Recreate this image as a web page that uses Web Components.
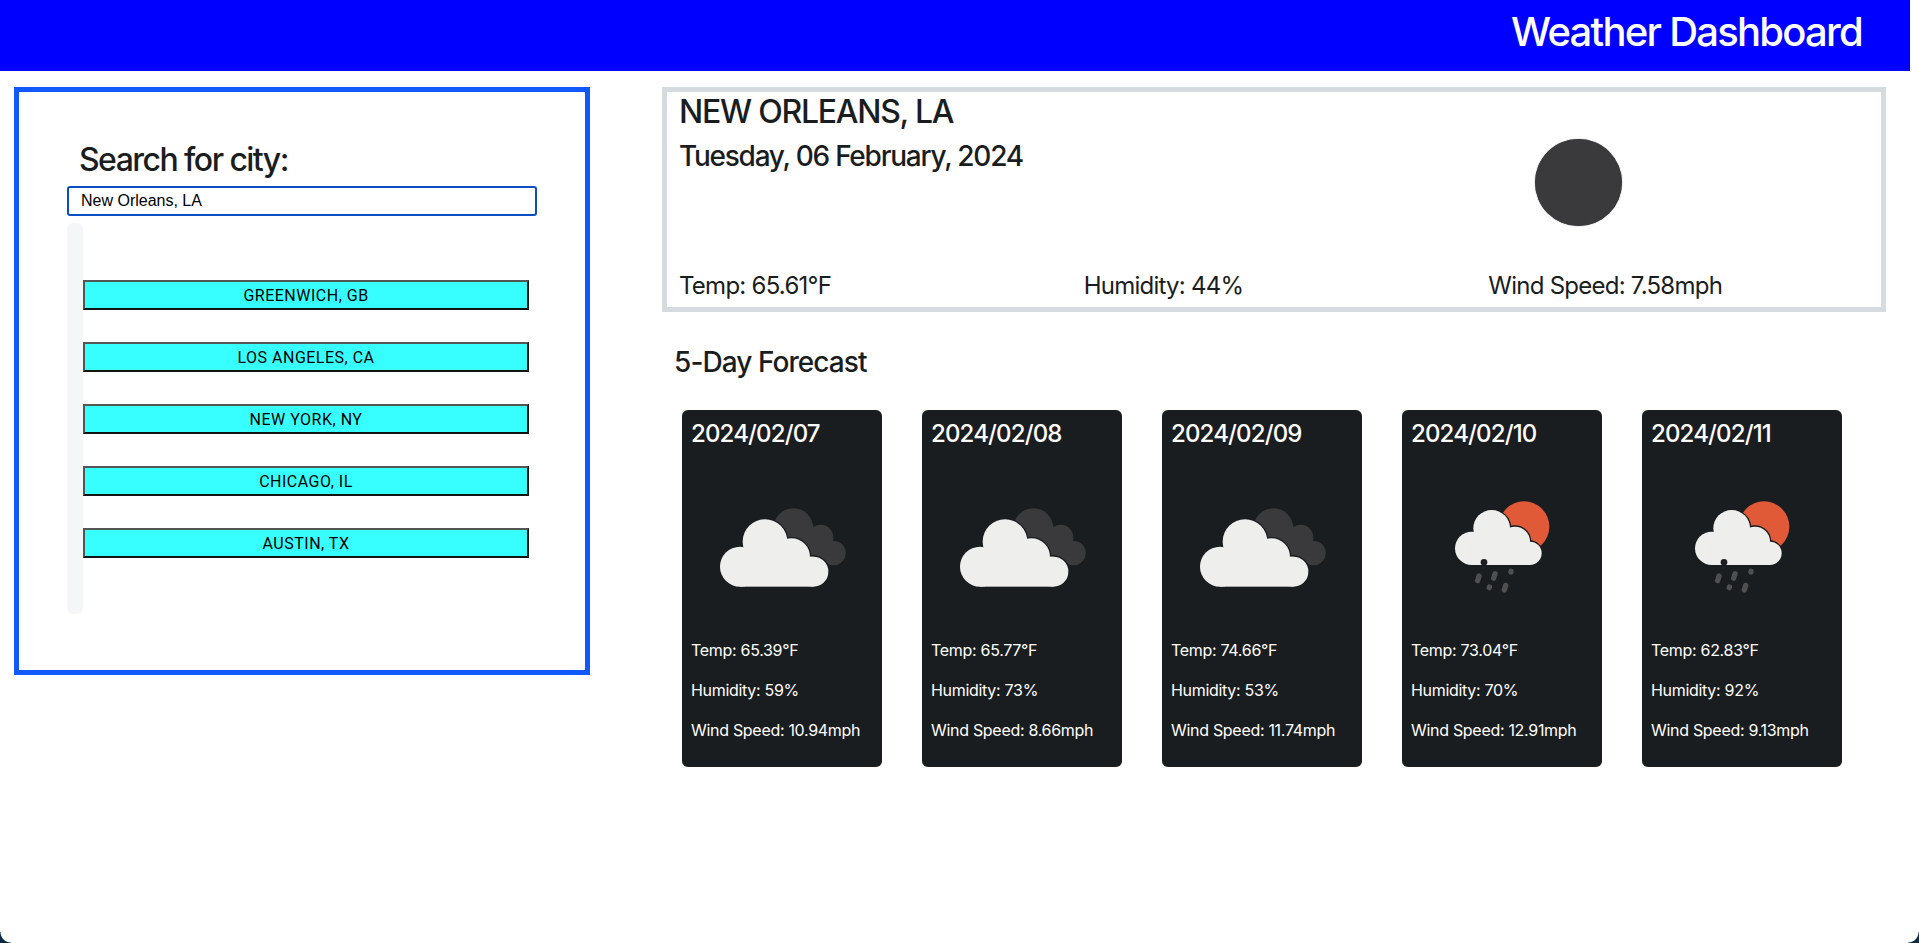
<!DOCTYPE html>
<html lang="en">
<head>
<meta charset="utf-8">
<title>Weather Dashboard</title>
<style>
	html, body {
		margin: 0;
		background: #fff;
		color: #1a1d20;
		font-family: Inter, sans-serif;
	}
</style>
</head>
<body>
<weather-app>
	<app-header slot="header">Weather Dashboard</app-header>
	<search-panel slot="search" value="New Orleans, LA">
		<city-button>GREENWICH, GB</city-button>
		<city-button>LOS ANGELES, CA</city-button>
		<city-button>NEW YORK, NY</city-button>
		<city-button>CHICAGO, IL</city-button>
		<city-button>AUSTIN, TX</city-button>
	</search-panel>
	<current-weather slot="current" city="NEW ORLEANS, LA" date="Tuesday, 06 February, 2024" temp="65.61" humidity="44" wind="7.58"></current-weather>
	<forecast-card slot="forecast" date="2024/02/07" icon="clouds" temp="65.39" humidity="59" wind="10.94"></forecast-card>
	<forecast-card slot="forecast" date="2024/02/08" icon="clouds" temp="65.77" humidity="73" wind="8.66"></forecast-card>
	<forecast-card slot="forecast" date="2024/02/09" icon="clouds" temp="74.66" humidity="53" wind="11.74"></forecast-card>
	<forecast-card slot="forecast" date="2024/02/10" icon="rain" temp="73.04" humidity="70" wind="12.91"></forecast-card>
	<forecast-card slot="forecast" date="2024/02/11" icon="rain" temp="62.83" humidity="92" wind="9.13"></forecast-card>
</weather-app>

<script>
(() => {
	const define = (name, styles, markup) => {
		customElements.define(name,
			class extends HTMLElement {
				constructor() {
					super();
					this.attachShadow({ mode: 'open' });
				}

				connectedCallback() {
					const attr = (key) => this.getAttribute(key);
					this.shadowRoot.innerHTML = `<style>${styles}</style>${markup(attr)}`;
				}
			}
		);
	};

	const cloud_shape = (parts) => parts.map(([ x, y, r ]) => `<circle cx="${x}" cy="${y}" r="${r}"/>`).join('');

	define('app-header', `
		:host {
			display: block;
			height: 71px;
			margin-right: 9px;
			background: #0000ff;
			color: #fff;
		}

		h1 {
			margin: 0;
			padding-right: 48px;
			font-size: 40px;
			font-weight: 500;
			letter-spacing: -1.75px;
			line-height: 64px;
			text-align: right;
		}
	`, () => `<h1><slot></slot></h1>`);

	define('city-button', `
		:host {
			display: block;
		}

		button {
			display: block;
			box-sizing: border-box;
			width: 100%;
			height: 30px;
			padding: 0;
			background: #38ffff;
			border: 2px solid;
			border-color: #555 #141414 #141414 #555;
			color: #000;
			font-family: Roboto, sans-serif;
			font-size: 16px;
			letter-spacing: 0.5px;
			text-align: center;
		}
	`, () => `<button type="button"><slot></slot></button>`);

	define('search-panel', `
		:host {
			display: block;
			box-sizing: border-box;
			height: 588px;
			padding: 49px 48px 0;
			border: 5px solid #1059ff;
		}

		h3 {
			margin: 0 0 8px;
			padding-left: 12px;
			font-size: 32px;
			font-weight: 500;
			letter-spacing: -1.55px;
			line-height: 37px;
		}

		input {
			display: block;
			box-sizing: border-box;
			width: 470px;
			height: 30px;
			padding: 0 12px;
			background: #fff;
			border: 2px solid #0b4fc4;
			border-radius: 3px;
			color: #000;
			font-family: "Liberation Sans", sans-serif;
			font-size: 16px;
			outline: none;
		}

		.history {
			display: flex;
			width: 470px;
			margin-top: 7px;
		}

		.track {
			flex: 0 0 16px;
			height: 391px;
			background: #f5f6f8;
			border-radius: 6px;
		}

		.list {
			flex: 1;
			display: flex;
			flex-direction: column;
			gap: 32px;
			padding: 57px 8px 0 0;
		}
	`, (attr) => `
		<h3>Search for city:</h3>
		<input type="text" value="${attr('value')}">
		<div class="history">
			<div class="track"></div>
			<div class="list"><slot></slot></div>
		</div>
	`);

	define('current-weather', `
		:host {
			display: block;
			box-sizing: border-box;
			height: 225px;
			border: 5px solid #d6dbdf;
		}

		.top {
			display: grid;
			grid-template-columns: 1fr 1fr;
			align-items: center;
			height: 179px;
		}

		.names {
			align-self: start;
			padding-left: 12px;
		}

		h2, h3 {
			margin: 0;
			font-weight: 500;
		}

		h2 {
			padding-top: 1px;
			font-size: 32px;
			letter-spacing: -1.25px;
			line-height: 38px;
		}

		h3 {
			margin-top: 8px;
			font-size: 28px;
			letter-spacing: -1.25px;
			line-height: 34px;
		}

		.icon {
			justify-self: center;
			width: 87px;
			height: 87px;
			margin: 1px 0 0 2px;
			background: #3a3a3c;
			border-radius: 50%;
			box-shadow: 0 0 1px #3a3a3c;
		}

		.stats {
			display: grid;
			grid-template-columns: repeat(3, 1fr);
			font-size: 24px;
			letter-spacing: -0.75px;
			line-height: 29px;
		}

		.stats span {
			padding-left: 12px;
		}
	`, (attr) => `
		<div class="top">
			<div class="names">
				<h2>${attr('city')}</h2>
				<h3>${attr('date')}</h3>
			</div>
			<div class="icon"></div>
		</div>
		<div class="stats">
			<span>Temp: ${attr('temp')}°F</span>
			<span>Humidity: ${attr('humidity')}%</span>
			<span>Wind Speed: ${attr('wind')}mph</span>
		</div>
	`);

	const cloud_front = [ [ 255, 425, 67 ], [ 180, 500, 60 ], [ 335, 470, 55 ], [ 400, 515, 45 ] ];
	const cloud_back = [ [ 340, 385, 60 ], [ 422, 412, 38 ], [ 460, 459, 37 ], [ 400, 440, 50 ] ];
	const rain_front = [ [ 275, 145, 55 ], [ 215, 205, 50 ], [ 345, 185, 45 ], [ 390, 220, 35 ] ];
	const drops = [ [ 235, 295, 16, 15 ], [ 283, 288, 16, 15 ], [ 333, 275, 16, 9 ], [ 268, 322, 16, 9 ], [ 315, 323, 16, 15 ] ];

	const icons = {
		clouds: `
			<svg viewBox="36 144 540 570">
				<g fill="#3a3a3c">${cloud_shape(cloud_back)}</g>
				<g fill="#1a1d20" stroke="#1a1d20" stroke-width="8">${cloud_shape(cloud_front)}<rect x="180" y="470" width="220" height="90"/></g>
				<g fill="#eeeeec">${cloud_shape(cloud_front)}<rect x="180" y="470" width="220" height="90"/></g>
			</svg>`,
		rain: `
			<svg viewBox="36 -96 540 570">
				<circle cx="372" cy="140" r="76" fill="#e05a38"/>
				<g fill="#1a1d20" stroke="#1a1d20" stroke-width="8">${cloud_shape(rain_front)}<rect x="215" y="185" width="175" height="70"/></g>
				<g fill="#eeeeec">${cloud_shape(rain_front)}<rect x="215" y="185" width="175" height="70"/></g>
				<circle cx="252" cy="247" r="10" fill="#1a1d20"/>
				<g fill="#4d4f51">${drops.map(([ x, y, w, h ]) => `<rect x="${x - w / 2}" y="${y - h}" width="${w}" height="${h * 2}" rx="7" transform="rotate(18 ${x} ${y})"/>`).join('')}</g>
			</svg>`,
	};

	define('forecast-card', `
		:host {
			display: block;
			box-sizing: border-box;
			width: 200px;
			height: 357px;
			padding: 9px;
			background: #1a1d20;
			border-radius: 6px;
			color: #fff;
		}

		h4 {
			margin: 0;
			font-size: 24px;
			font-weight: 500;
			letter-spacing: -0.85px;
			line-height: 29px;
		}

		svg {
			display: block;
			width: 180px;
			height: 190px;
			margin-left: 1px;
		}

		p {
			margin: 0 0 16px;
			font-size: 16px;
			letter-spacing: -0.3px;
			line-height: 24px;
		}

		p:last-child {
			margin-bottom: 0;
		}
	`, (attr) => `
		<h4>${attr('date')}</h4>
		${icons[attr('icon')]}
		<p>Temp: ${attr('temp')}°F</p>
		<p>Humidity: ${attr('humidity')}%</p>
		<p>Wind Speed: ${attr('wind')}mph</p>
	`);

	define('weather-app', `
		:host {
			display: block;
			min-height: 943px;
		}

		main {
			display: grid;
			grid-template-columns: 576px 1224px;
			gap: 72px;
			padding: 16px 0 0 14px;
			align-items: start;
		}

		h2 {
			margin: 33px 0 31px 12px;
			font-size: 28px;
			font-weight: 500;
			letter-spacing: -0.93px;
			line-height: 34px;
		}

		.cards {
			display: flex;
			gap: 40px;
			padding-left: 20px;
		}

		.corner {
			position: fixed;
			bottom: 0;
			width: 11px;
			height: 11px;
		}

		.corner.left {
			left: 0;
			background: radial-gradient(circle at 100% 0, transparent 10px, #0b2a45 11px);
		}

		.corner.right {
			right: 0;
			background: radial-gradient(circle at 0 0, transparent 10px, #0b2a45 11px);
		}
	`, () => `
		<slot name="header"></slot>
		<main>
			<slot name="search"></slot>
			<section>
				<slot name="current"></slot>
				<h2>5-Day Forecast</h2>
				<div class="cards"><slot name="forecast"></slot></div>
			</section>
		</main>
		<div class="corner left"></div>
		<div class="corner right"></div>
	`);
})();
</script>
</body>
</html>
